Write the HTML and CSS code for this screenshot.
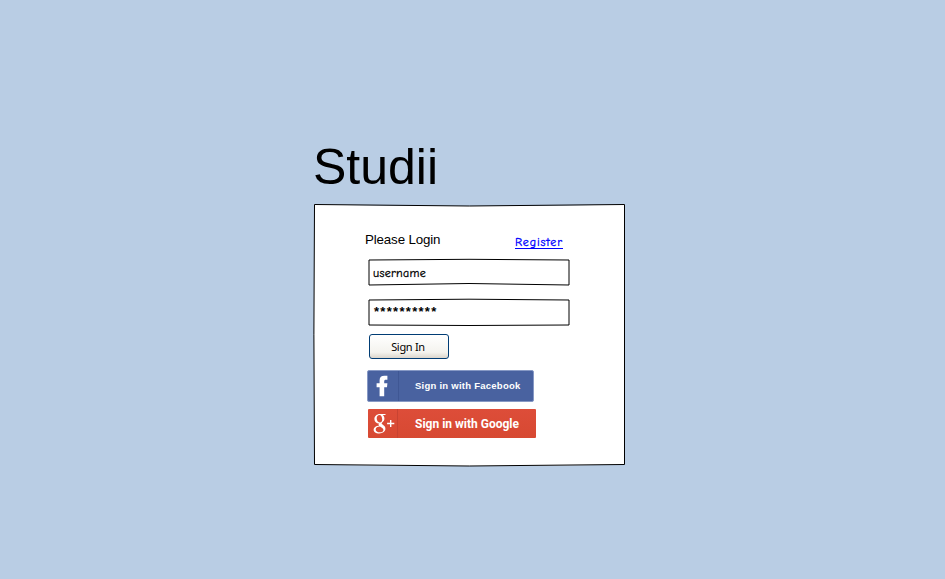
FILE: index.html
```html
<!DOCTYPE html>
<html lang="en">
<head>
<meta charset="utf-8">
<title>Studii</title>
<link rel="stylesheet" href="styles.css">
</head>
<body>
<main class="page">
  <h1 class="title">Studii</h1>
  <section class="card">
    <svg class="frame" width="313" height="264" viewBox="0 0 313 264"><path d="M1.5 1.5Q156 4.5 311.5 1.5V261.5Q156 264.5 1.5 261.5Q.3 131 1.5 1.5Z" fill="#fff" stroke="#000"/></svg>
    <form class="form">
      <header class="head">
        <h2 class="prompt">Please Login</h2>
        <a class="register" href="#">Register</a>
      </header>
      <label class="field">
        <svg class="frame" width="202" height="28" viewBox="0 0 202 28"><path d="M1 2Q101 .6 201 2V27Q101 24 1 27Z" fill="#fff" stroke="#000"/></svg>
        <span class="value">username</span>
      </label>
      <label class="field field-password">
        <svg class="frame" width="202" height="28" viewBox="0 0 202 28"><path d="M1 2Q101 .4 201 2V27Q101 28 1 27Z" fill="#fff" stroke="#000"/></svg>
        <span class="value stars">**********</span>
      </label>
      <button class="signin" type="button">Sign In</button>
      <a class="social facebook" href="#">
        <span class="logo"><svg width="30" height="30" viewBox="0 0 30 30"><path d="M11.6 25.2V16.2H8.6V12.2H11.6V9.3C11.6 6.2 13.4 4.8 16.4 4.8H19.4V8.8H17.9C16.6 8.8 16.2 9.3 16.2 10.4V12.2H19.4L19 16.2H16.2V25.2Z" fill="#fff"/></svg></span>
        <span class="label">Sign in with Facebook</span>
      </a>
      <a class="social google" href="#">
        <span class="logo"><svg width="30" height="29" viewBox="0 0 30 29"><path fill="#fff" fill-rule="evenodd" d="M18.2 5H12C8.8 5 6.4 7.2 6.4 10C6.4 12.8 8.5 14.6 11 14.6C10.4 15.3 10.4 16 11 16.7C7.7 16.8 5.6 18.6 5.6 20.7C5.6 23.1 8 24.4 11.2 24.4C15 24.4 17.4 22.4 17.4 19.8C17.4 17.8 16.3 16.8 14.6 15.6C13.5 14.8 13.4 14.3 14.2 13.6C15.7 12.4 16.4 11.3 16.4 9.6C16.4 8.1 15.8 6.8 14.8 6H16.8ZM11.5 6C13 6 14.2 8 14.2 10.4C14.2 12.4 13.3 13.4 11.8 13.4C10 13.4 8.7 11.4 8.7 9.2C8.7 7.3 9.8 6 11.5 6ZM12 17.6C14.3 19 15.4 19.6 15.4 21C15.4 22.5 14.1 23.3 11.8 23.3C9.4 23.3 7.7 22.2 7.7 20.4C7.7 18.7 9.5 17.6 12 17.6Z"/><path d="M22.7 10.9V18.1M19.1 14.5H26.3" fill="none" stroke="#fff" stroke-width="1.4"/></svg></span>
        <span class="label">Sign in with Google</span>
      </a>
    </form>
  </section>
</main>
</body>
</html>
```

FILE: styles.css
```css
* {
  box-sizing: border-box;
}

body {
  margin: 0;
  background: #b9cde4;
  color: #000;
  font-family: "Liberation Sans", Arial, sans-serif;
}

.page {
  width: 313px;
  margin-left: 313px;
  padding-top: 138px;
}

.title {
  height: 65px;
  margin: 0;
  font-size: 50px;
  font-weight: 400;
  line-height: 59px;
}

.card,
.field {
  display: grid;
}

.card > *,
.field > * {
  grid-area: 1 / 1;
}

.frame {
  display: block;
}

.form {
  display: flex;
  flex-direction: column;
  align-items: flex-start;
  padding: 28px 0 0 54px;
}

.head {
  display: flex;
  justify-content: space-between;
  width: 199px;
  height: 27px;
  margin-left: -2px;
}

.prompt {
  margin: 0;
  font-size: 13.33px;
  font-weight: 400;
  line-height: 17px;
  letter-spacing: -0.14px;
  white-space: nowrap;
}

.register {
  align-self: flex-start;
  width: 48px;
  height: 18px;
  margin-right: 1px;
  border-bottom: 1px solid #00f;
  color: #00f;
  font: 500 12px/22px "Comic Sans MS", "Comic Neue", Lato, sans-serif;
  letter-spacing: 0.85px;
  text-decoration: none;
  white-space: nowrap;
  -webkit-text-stroke: 0.3px;
}

.field {
  width: 202px;
  height: 28px;
  margin-left: 1px;
}

.field-password {
  margin-top: 12px;
}

.value {
  padding-left: 5px;
  font: 500 12px/30px "Comic Sans MS", "Comic Neue", Lato, sans-serif;
  letter-spacing: 0.3px;
  -webkit-text-stroke: 0.3px;
}

.stars {
  padding: 0 0 0 6px;
  font: 700 13px/28px "Liberation Sans", sans-serif;
  letter-spacing: 1.3px;
  -webkit-text-stroke: 0;
}

.signin {
  width: 80px;
  height: 25px;
  margin: 8px 0 0 2px;
  padding: 0 2px 0 0;
  border: 1px solid #003c74;
  border-radius: 3px;
  background: linear-gradient(#fff, #f4f3ee 75%, #dcd6cc);
  color: #000;
  font: 11px/23px Tahoma, "Noto Sans", sans-serif;
  letter-spacing: -0.3px;
}

.social {
  display: flex;
  color: #fff;
  text-decoration: none;
  white-space: nowrap;
}

.logo {
  flex: none;
  width: 31px;
}

.logo svg {
  display: block;
}

.facebook {
  width: 167px;
  height: 32px;
  margin-top: 11px;
  border: 1px solid #8799c5;
  border-radius: 2px;
  background: #4962a0;
}

.facebook .logo {
  border-right: 1px solid #3f5794;
}

.facebook .label {
  padding-left: 16px;
  font: 700 9.5px/29px "Liberation Sans", sans-serif;
  letter-spacing: 0.25px;
}

.google {
  width: 168px;
  height: 29px;
  margin: 7px 0 0 1px;
  border-radius: 1px;
  background: linear-gradient(#dd4d39, #d74932);
}

.google .logo {
  width: 30px;
  border-right: 1px solid #c84332;
}

.google .label {
  padding-left: 17px;
  font: 700 12px/30px Roboto, sans-serif;
}
```
